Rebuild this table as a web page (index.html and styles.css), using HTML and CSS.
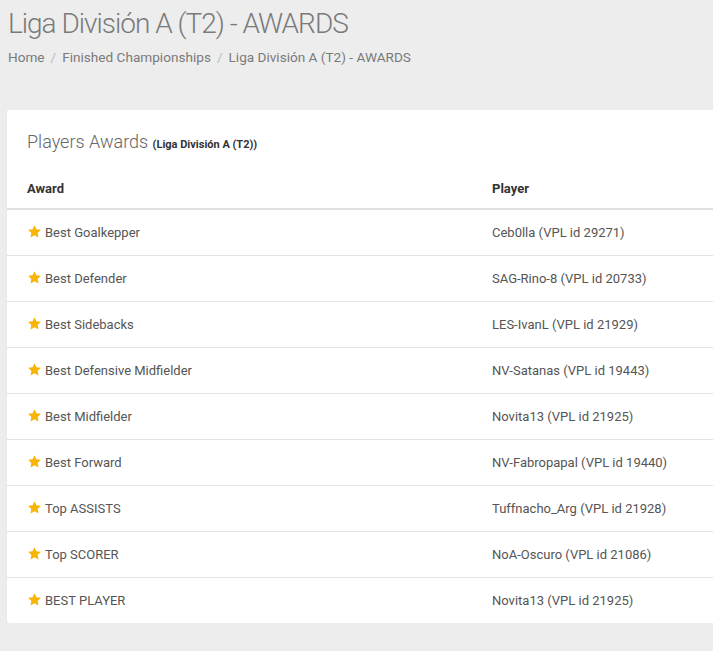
FILE: index.html
```html
<!DOCTYPE html>
<html>
<head>
<meta charset="utf-8">
<link rel="stylesheet" href="styles.css">
</head>
<body>
<div class="page">
  <h1 class="title">Liga División A (T2) - AWARDS</h1>
  <div class="crumbs">
    <span>Home</span><span class="sep">/</span><span>Finished Championships</span><span class="sep">/</span><span>Liga División A (T2) - AWARDS</span>
  </div>
  <div class="card">
    <div class="card-head">Players Awards <small>(Liga División A (T2))</small></div>
    <table class="awards">
      <thead>
        <tr><th class="c1">Award</th><th>Player</th></tr>
      </thead>
      <tbody>
        <tr><td class="c1"><svg class="star" viewBox="0 0 24 24"><path d="M12 1.8l3.1 6.6 7.2.9-5.3 5 1.4 7.1L12 17.9l-6.4 3.5 1.4-7.1-5.3-5 7.2-.9z"/></svg>Best Goalkepper</td><td>Ceb0lla (VPL id 29271)</td></tr>
        <tr><td class="c1"><svg class="star" viewBox="0 0 24 24"><path d="M12 1.8l3.1 6.6 7.2.9-5.3 5 1.4 7.1L12 17.9l-6.4 3.5 1.4-7.1-5.3-5 7.2-.9z"/></svg>Best Defender</td><td>SAG-Rino-8 (VPL id 20733)</td></tr>
        <tr><td class="c1"><svg class="star" viewBox="0 0 24 24"><path d="M12 1.8l3.1 6.6 7.2.9-5.3 5 1.4 7.1L12 17.9l-6.4 3.5 1.4-7.1-5.3-5 7.2-.9z"/></svg>Best Sidebacks</td><td>LES-IvanL (VPL id 21929)</td></tr>
        <tr><td class="c1"><svg class="star" viewBox="0 0 24 24"><path d="M12 1.8l3.1 6.6 7.2.9-5.3 5 1.4 7.1L12 17.9l-6.4 3.5 1.4-7.1-5.3-5 7.2-.9z"/></svg>Best Defensive Midfielder</td><td>NV-Satanas (VPL id 19443)</td></tr>
        <tr><td class="c1"><svg class="star" viewBox="0 0 24 24"><path d="M12 1.8l3.1 6.6 7.2.9-5.3 5 1.4 7.1L12 17.9l-6.4 3.5 1.4-7.1-5.3-5 7.2-.9z"/></svg>Best Midfielder</td><td>Novita13 (VPL id 21925)</td></tr>
        <tr><td class="c1"><svg class="star" viewBox="0 0 24 24"><path d="M12 1.8l3.1 6.6 7.2.9-5.3 5 1.4 7.1L12 17.9l-6.4 3.5 1.4-7.1-5.3-5 7.2-.9z"/></svg>Best Forward</td><td>NV-Fabropapal (VPL id 19440)</td></tr>
        <tr><td class="c1"><svg class="star" viewBox="0 0 24 24"><path d="M12 1.8l3.1 6.6 7.2.9-5.3 5 1.4 7.1L12 17.9l-6.4 3.5 1.4-7.1-5.3-5 7.2-.9z"/></svg>Top ASSISTS</td><td>Tuffnacho_Arg (VPL id 21928)</td></tr>
        <tr><td class="c1"><svg class="star" viewBox="0 0 24 24"><path d="M12 1.8l3.1 6.6 7.2.9-5.3 5 1.4 7.1L12 17.9l-6.4 3.5 1.4-7.1-5.3-5 7.2-.9z"/></svg>Top SCORER</td><td>NoA-Oscuro (VPL id 21086)</td></tr>
        <tr><td class="c1"><svg class="star" viewBox="0 0 24 24"><path d="M12 1.8l3.1 6.6 7.2.9-5.3 5 1.4 7.1L12 17.9l-6.4 3.5 1.4-7.1-5.3-5 7.2-.9z"/></svg>BEST PLAYER</td><td>Novita13 (VPL id 21925)</td></tr>
      </tbody>
    </table>
  </div>
</div>
</body>
</html>
```
FILE: styles.css
```css
html, body {
  margin: 0;
  padding: 0;
  background: #ededed;
  overflow: hidden;
}
body {
  font-family: Roboto, "Liberation Sans", sans-serif;
  color: #555;
}
.page {
  padding: 4px 0 0 7px;
}
.title {
  margin: 0;
  font-family: "Roboto Light", Roboto, sans-serif;
  font-weight: 300;
  font-size: 28px;
  line-height: 40px;
  letter-spacing: -1px;
  color: #7a7a7a;
  padding-left: 1px;
}
.crumbs {
  margin-top: 4px;
  padding-left: 1px;
  font-size: 13.6px;
  line-height: 18px;
  color: #7a7a7a;
}
.crumbs .sep {
  color: #bbb;
  margin: 0 6px;
}
.card {
  margin-top: 44px;
  background: #fff;
  box-shadow: 0 1px 2px rgba(0,0,0,0.08);
  border-radius: 2px 0 0 2px;
}
.card-head {
  padding: 20px 20px 0 20px;
  font-size: 18px;
  font-weight: 300;
  color: #666;
  line-height: 24px;
}
.card-head small {
  font-size: 11px;
  font-weight: 700;
  color: #333;
}
.awards {
  width: 100%;
  border-collapse: collapse;
  margin-top: 24px;
  font-size: 13px;
}
.awards th {
  text-align: left;
  font-weight: 700;
  color: #333;
  padding: 0 20px 11px 20px;
  vertical-align: top;
  line-height: 16px;
  border-bottom: 2px solid #e0e0e0;
}
.awards .c1 { width: 425px; }
.awards td {
  padding: 0 20px;
  height: 45px;
  line-height: 16px;
  color: #555;
  vertical-align: middle;
  border-top: 1px solid #e2e2e2;
}
.awards tbody tr:first-child td { border-top: none; }
.star {
  width: 15px;
  height: 15px;
  fill: #f9b506;
  vertical-align: -2px;
  margin-right: 3px;
}
```
